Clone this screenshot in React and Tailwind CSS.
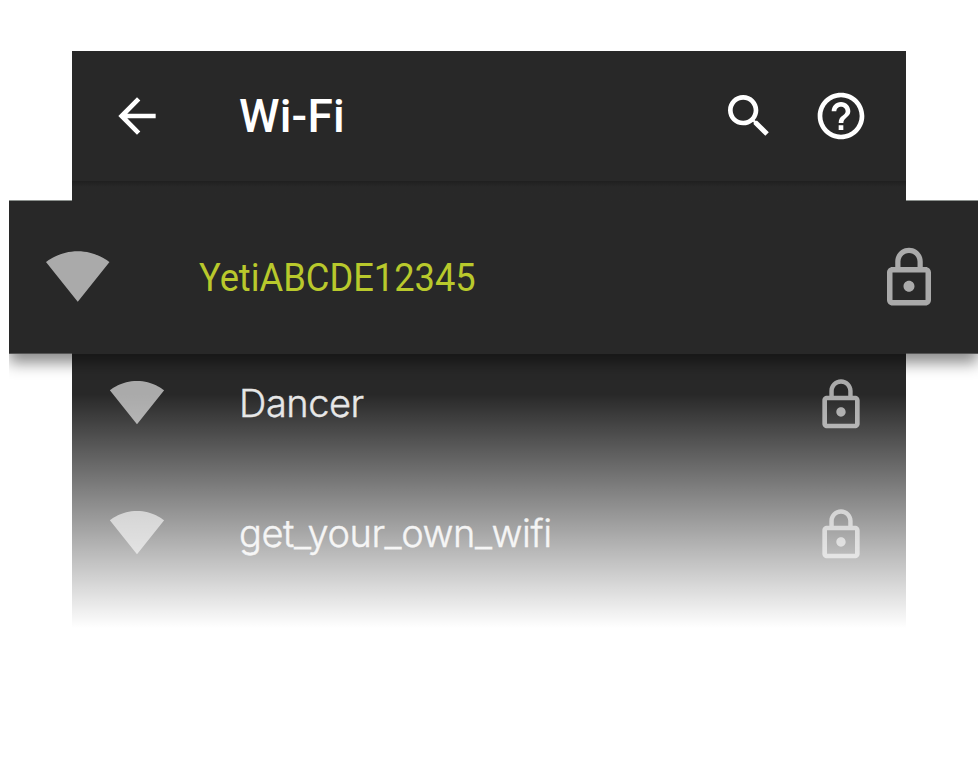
const ROBOTO = "font-['Roboto','Liberation_Sans',sans-serif]";

function Icon({ d, className }) {
  return (
    <svg viewBox="0 0 24 24" fill="currentColor" className={`shrink-0 ${className}`} aria-hidden="true">
      <path d={d} />
    </svg>
  );
}

const PATHS = {
  back: "M20 11H7.83l5.59-5.59L12 4l-8 8 8 8 1.41-1.41L7.83 13H20v-2z",
  search:
    "M15.5 14h-.79l-.28-.27C15.41 12.59 16 11.11 16 9.5 16 5.91 13.09 3 9.5 3S3 5.91 3 9.5 5.91 16 9.5 16c1.61 0 3.09-.59 4.23-1.57l.27.28v.79l5 4.99L20.49 19l-4.99-5zm-6 0C7.01 14 5 11.99 5 9.5S7.01 5 9.5 5 14 7.01 14 9.5 11.99 14 9.5 14z",
  help: "M11 18h2v-2h-2v2zm1-16C6.48 2 2 6.48 2 12s4.48 10 10 10 10-4.48 10-10S17.52 2 12 2zm0 18c-4.41 0-8-3.59-8-8s3.59-8 8-8 8 3.59 8 8-3.59 8-8 8zm0-14c-2.21 0-4 1.79-4 4h2c0-1.1.9-2 2-2s2 .9 2 2c0 2-3 1.75-3 5h2c0-2.25 3-2.5 3-5 0-2.21-1.79-4-4-4z",
  wifi: "M12.01 21.49L23.64 7c-.45-.34-4.93-4-11.64-4C5.28 3 .81 6.66.36 7l11.63 14.49.01.01.01-.01z",
  lock: "M12 17c1.1 0 2-.9 2-2s-.9-2-2-2-2 .9-2 2 .9 2 2 2zm6-9h-1V6c0-2.76-2.24-5-5-5S7 3.24 7 6v2H6c-1.1 0-2 .9-2 2v10c0 1.1.9 2 2 2h12c1.1 0 2-.9 2-2V10c0-1.1-.9-2-2-2zM8.9 6c0-1.71 1.39-3.1 3.1-3.1s3.1 1.39 3.1 3.1v2H8.9V6zM18 20H6V10h12v10z",
};

function NetworkRow({ name }) {
  return (
    <li className="flex h-[130px] items-start px-[37px]">
      <Icon d={PATHS.wifi} className="mt-[20.4px] size-[56px] text-[#aaaaaa]" />
      <span className="mt-[26px] ml-[74px] flex-1 font-['Inter','Roboto',sans-serif] text-[38px] leading-[46px] font-light tracking-[-0.45px] whitespace-nowrap text-[#e6e6e6] [-webkit-text-stroke:0.4px_#e6e6e6]">
        {name}
      </span>
      <Icon d={PATHS.lock} className="mt-[23px] size-[56px] text-[#aaaaaa]" />
    </li>
  );
}

export default function App() {
  return (
    <main className={`h-[762px] w-[978px] overflow-hidden bg-white pt-[51px] ${ROBOTO}`}>
      <header className="mx-[72px] flex h-[130px] items-center bg-[#282828] px-[37px] text-white">
        <Icon d={PATHS.back} className="size-[56px]" />
        <h1 className="ml-[74px] flex-1 text-[46px] leading-[54px] font-medium tracking-[0.2px] whitespace-nowrap">Wi-Fi</h1>
        <Icon d={PATHS.search} className="mr-[36px] size-[56px]" />
        <Icon d={PATHS.help} className="size-[56px]" />
      </header>
      <div className="flex h-[20px] items-end pl-[9px]">
        <div className="h-px w-[63px] bg-[#8c918e]" />
        <div className="h-full w-[834px] bg-linear-to-b from-[#1f1f1f] to-[#282828] to-[6px]" />
        <div className="h-px flex-1 bg-[#8c918e]" />
      </div>
      <section className="relative z-10 ml-[9px] flex h-[153px] flex-col bg-[#282828] shadow-[0_9px_14px_0px_rgba(0,0,0,0.45)] [clip-path:inset(0_0_-30px_0)]">
        <div className="flex h-[152px] items-start pl-[36px]">
          <Icon d={PATHS.wifi} className="mt-[42px] size-[65.5px] text-[#aaaaaa]" />
          <span className="mt-[54px] ml-[88px] flex-1 origin-left scale-x-[0.93] text-[39px] leading-[46px] whitespace-nowrap text-[#b9c92c]">
            YetiABCDE12345
          </span>
          <Icon d={PATHS.lock} className="mt-[44px] mr-[36px] size-[66px] text-[#aaaaaa]" />
        </div>
        <div className="flex h-px justify-between">
          <div className="w-[63px] bg-[#555555]" />
          <div className="w-[72px] bg-[#555555]" />
        </div>
      </section>
      <section className="relative mx-[72px] h-[275px] overflow-hidden bg-[#282828]">
        <ul>
          <NetworkRow name="Dancer" />
          <NetworkRow name="get_your_own_wifi" />
        </ul>
        <div className="absolute inset-0 bg-linear-to-b from-white/0 from-[40px] to-white to-[274px]" />
      </section>
    </main>
  );
}
